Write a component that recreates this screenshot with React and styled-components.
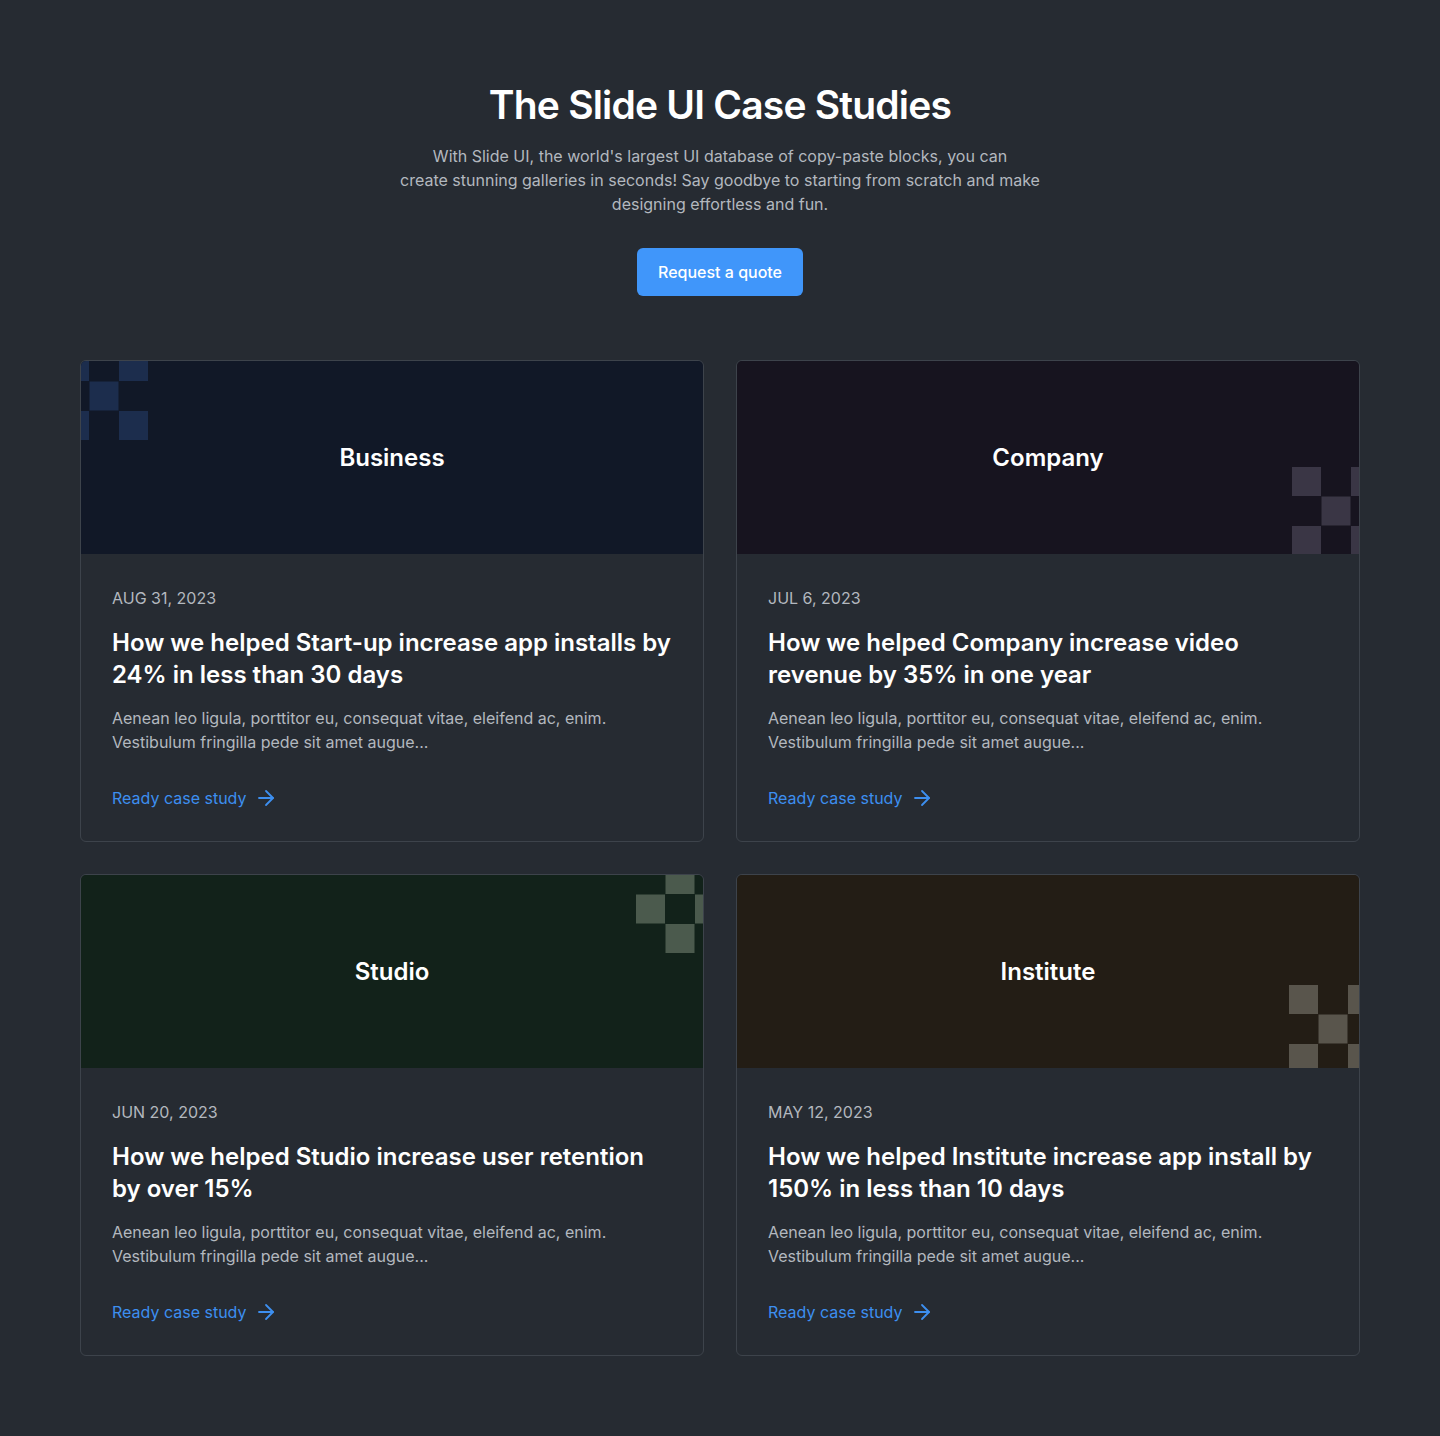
import React from "react";
import styled, { createGlobalStyle } from "styled-components";
import { ArrowRight } from "lucide-react";

const casos = [
  {
    categoria: "Business",
    fondo: "#111827",
    cuadro: "#1c2d4d",
    patron: { left: "-21px", top: "-9px", impar: false },
    fecha: "AUG 31, 2023",
    titulo: "How we helped Start-up increase app installs by 24% in less than 30 days",
  },
  {
    categoria: "Company",
    fondo: "#17141f",
    cuadro: "#3a3645",
    patron: { left: "555px", top: "106px", impar: false },
    fecha: "JUL 6, 2023",
    titulo: "How we helped Company increase video revenue by 35% in one year",
  },
  {
    categoria: "Studio",
    fondo: "#12221a",
    cuadro: "#4b5a4d",
    patron: { left: "555px", top: "-10px", impar: true },
    fecha: "JUN 20, 2023",
    titulo: "How we helped Studio increase user retention by over 15%",
  },
  {
    categoria: "Institute",
    fondo: "#231d15",
    cuadro: "#59554c",
    patron: { left: "552px", top: "110px", impar: false },
    fecha: "MAY 12, 2023",
    titulo: "How we helped Institute increase app install by 150% in less than 10 days",
  },
];

const Checker = ({ color, impar }) => {
  const celda = 29.5;
  const cuadros = [];
  for (let r = 0; r < 3; r++) {
    for (let c = 0; c < 3; c++) {
      if ((r + c) % 2 === (impar ? 1 : 0)) {
        cuadros.push(
          <rect key={`${r}-${c}`} x={c * celda} y={r * celda} width={celda - 0.5} height={celda - 0.5} fill={color} />
        );
      }
    }
  }
  return (
    <svg width={celda * 3} height={celda * 3} viewBox={`0 0 ${celda * 3} ${celda * 3}`}>
      {cuadros}
    </svg>
  );
};

export default function App() {
  return (
    <>
      <Global />
      <Pagina>
        <Cabecera>
          <Titulo>The Slide UI Case Studies</Titulo>
          <Subtitulo>
            With Slide UI, the world's largest UI database of copy-paste blocks, you can
            <br />
            create stunning galleries in seconds! Say goodbye to starting from scratch and make
            designing effortless and fun.
          </Subtitulo>
          <Boton>Request a quote</Boton>
        </Cabecera>
        <Grilla>
          {casos.map((caso) => (
            <Tarjeta key={caso.categoria}>
              <Banner fondo={caso.fondo}>
                <Patron left={caso.patron.left} top={caso.patron.top}>
                  <Checker color={caso.cuadro} impar={caso.patron.impar} />
                </Patron>
                <Categoria>{caso.categoria}</Categoria>
              </Banner>
              <Cuerpo>
                <Fecha>{caso.fecha}</Fecha>
                <TituloCaso>{caso.titulo}</TituloCaso>
                <Texto>
                  Aenean leo ligula, porttitor eu, consequat vitae, eleifend ac, enim.
                  <br />
                  Vestibulum fringilla pede sit amet augue...
                </Texto>
                <Enlace href="#">
                  Ready case study <ArrowRight size={24} strokeWidth={1.8} />
                </Enlace>
              </Cuerpo>
            </Tarjeta>
          ))}
        </Grilla>
      </Pagina>
    </>
  );
}

const Global = createGlobalStyle`
  body {
    margin: 0;
    background: #262b32;
    font-family: Inter, "Noto Sans", sans-serif;
    -webkit-font-smoothing: antialiased;
  }
`;

const Pagina = styled.main`
  min-height: 1436px;
  box-sizing: border-box;
  padding: 80px 80px 80px;
  background: #262b32;
`;

const Cabecera = styled.header`
  display: flex;
  flex-direction: column;
  align-items: center;
  text-align: center;
`;

const Titulo = styled.h1`
  margin: 0;
  font-size: 39px;
  line-height: 50px;
  font-weight: 600;
  letter-spacing: -0.8px;
  color: #ffffff;
`;

const Subtitulo = styled.p`
  margin: 14px 0 0;
  max-width: 680px;
  font-size: 16px;
  line-height: 24px;
  color: #b3b8bf;
`;

const Boton = styled.button`
  margin-top: 32px;
  height: 48px;
  padding: 0 21px;
  border: none;
  border-radius: 6px;
  background: #4096fa;
  color: #fff;
  font-family: inherit;
  font-size: 16px;
  font-weight: 500;
  cursor: pointer;
`;

const Grilla = styled.section`
  margin-top: 64px;
  display: grid;
  grid-template-columns: repeat(2, 1fr);
  gap: 32px;
`;

const Tarjeta = styled.article`
  border: 1px solid #3d434b;
  border-radius: 6px;
  overflow: hidden;
`;

const Banner = styled.div`
  position: relative;
  height: 193px;
  overflow: hidden;
  display: flex;
  align-items: center;
  justify-content: center;
  background: ${(props) => props.fondo};
`;

const Patron = styled.div`
  position: absolute;
  left: ${(props) => props.left};
  top: ${(props) => props.top};
  line-height: 0;
`;

const Categoria = styled.h3`
  position: relative;
  margin: 0;
  font-size: 24px;
  font-weight: 600;
  color: #fff;
`;

const Cuerpo = styled.div`
  padding: 32px 31px 31px;
`;

const Fecha = styled.div`
  font-size: 16px;
  line-height: 24px;
  color: #b3b8bf;
`;

const TituloCaso = styled.h2`
  margin: 17px 0 0;
  font-size: 24px;
  line-height: 32px;
  font-weight: 600;
  color: #fff;
`;

const Texto = styled.p`
  margin: 15px 0 0;
  font-size: 16px;
  line-height: 24px;
  color: #b3b8bf;
`;

const Enlace = styled.a`
  margin-top: 32px;
  display: inline-flex;
  align-items: center;
  gap: 8px;
  font-size: 16px;
  line-height: 24px;
  color: #3d8ff0;
  text-decoration: none;
`;
